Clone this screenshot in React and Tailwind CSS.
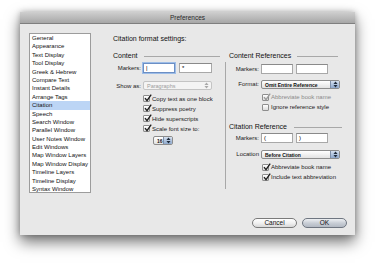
const panes = [
  'General',
  'Appearance',
  'Text Display',
  'Tool Display',
  'Greek & Hebrew',
  'Compare Text',
  'Instant Details',
  'Arrange Tags',
  'Citation',
  'Speech',
  'Search Window',
  'Parallel Window',
  'User Notes Window',
  'Edit Windows',
  'Map Window Layers',
  'Map Window Display',
  'Timeline Layers',
  'Timeline Display',
  'Syntax Window'
]

const Arrows = ({ color = '#222' }) => (
  <svg width="5" height="7" viewBox="0 0 5 7">
    <path d="M0.5 3 L2.5 0.6 L4.5 3 Z" fill={color} />
    <path d="M0.5 4 L2.5 6.4 L4.5 4 Z" fill={color} />
  </svg>
)

const Check = ({ checked, disabled }) => (
  <div className="w-[7px] h-[7px] shrink-0 relative rounded-[1px] border border-[#8e8e8e] bg-gradient-to-b from-white to-[#dcdcdc]">
    {checked && (
      <svg className="absolute -top-[2px] left-0" width="8" height="8" viewBox="0 0 8 8">
        <path
          d="M1 4.2 L3 6.6 L7.2 0.6"
          fill="none"
          stroke={disabled ? '#9a9a9a' : '#1c1c1c'}
          strokeWidth="1.3"
        />
      </svg>
    )}
  </div>
)

const CheckRow = ({ label, checked = false, disabled = false, indent }) => (
  <div className={`h-[10px] flex items-center gap-[2px] ${indent}`}>
    <Check checked={checked} disabled={disabled} />
    <span className={disabled ? 'text-[#8a8a8a]' : 'text-[#1a1a1a]'}>{label}</span>
  </div>
)

const Field = ({ value = '', focused = false, width = 'w-[32px]' }) => (
  <div
    className={`${width} h-[10px] bg-white flex items-center pl-[2px] text-[6px] leading-none ${
      focused
        ? 'border border-[#6c8fc4] shadow-[0_0_0_1px_#9dbde8]'
        : 'border border-[#a8a8a8] border-t-[#8a8a8a]'
    }`}
  >
    {value}
  </div>
)

const Popup = ({ value, width, disabled = false }) => (
  <div
    className={`${width} h-[9px] flex items-stretch rounded-[2px] border overflow-hidden ${
      disabled ? 'border-[#c4c4c4] bg-[#f4f4f4]' : 'border-[#8c8c8c] bg-gradient-to-b from-white to-[#e2e2e2]'
    }`}
  >
    <span
      className={`flex-1 pl-[3px] leading-[8px] ${
        disabled ? 'text-[5.5px] text-[#9c9c9c]' : 'text-[5px] text-[#111] font-bold'
      }`}
    >
      {value}
    </span>
    <span
      className={`w-[9px] flex items-center justify-center ${
        disabled ? '' : 'border-l border-[#7f8fa8] bg-gradient-to-b from-[#d6e1f0] to-[#8ea8cc]'
      }`}
    >
      <Arrows color={disabled ? '#a8a8a8' : '#1e2a3a'} />
    </span>
  </div>
)

const Header = ({ title, lineClass }) => (
  <div className="h-[8px] flex items-center text-[7px] leading-[8px] text-[#111]">
    <span>{title}</span>
    <div className={`h-px bg-[#a8a8a8] ${lineClass}`}></div>
  </div>
)

const Label = ({ text, width }) => (
  <span className={`${width} text-right pr-[2px] text-[#1a1a1a]`}>{text}</span>
)

const PillButton = ({ label, primary = false }) => (
  <button
    className={`w-[45px] h-[10px] rounded-full border text-[6.5px] leading-none text-[#111] ${
      primary
        ? 'border-[#6f7681] bg-gradient-to-b from-[#eef0f3] via-[#c9ced6] to-[#b3b9c3]'
        : 'border-[#7a7a7a] bg-gradient-to-b from-white via-[#f1f1f1] to-[#d8d8d8]'
    }`}
  >
    {label}
  </button>
)

const App = () => {
  return (
    <div className="w-[375px] h-[263px] bg-white pt-[12px] pl-[20px] font-['Liberation_Sans',Arial,sans-serif] text-[6px] leading-[8px]">
      <div className="w-[335px] h-[223px] bg-[#e8e8e8] flex flex-col shadow-[0_7px_14px_rgba(0,0,0,0.55),0_0_6px_rgba(0,0,0,0.25)]">
        {/* Title bar */}
        <div className="h-[12px] shrink-0 bg-gradient-to-b from-[#cfcfcf] to-[#a7a7a7] border-b border-[#7f7f7f] flex items-center justify-center text-[6.5px] text-[#2a2a2a]">
          Preferences
        </div>

        <div className="flex-1 flex">
          {/* Pane list */}
          <div className="pl-[9px] pt-[9px]">
            <div className="w-[62px] h-[160px] bg-white border border-[#9c9c9c]">
              {panes.map((p) => (
                <div
                  key={p}
                  className={`h-[8.4px] leading-[8.4px] pl-[2px] text-[#111] ${p === 'Citation' ? 'bg-[#bcd5f5]' : ''}`}
                >
                  {p}
                </div>
              ))}
            </div>
          </div>

          {/* Settings */}
          <div className="flex-1 flex flex-col pl-[22px] pt-[11px]">
            <div className="h-[8px] text-[7px] leading-[8px] text-[#111]">Citation format settings:</div>

            <div className="mt-[9px] flex">
              {/* Content */}
              <div className="w-[109px] flex flex-col">
                <Header title="Content" lineClass="flex-1 ml-[6px] mr-[2px]" />
                <div className="mt-[2px] h-[12px] flex items-center">
                  <Label text="Markers:" width="w-[30px]" />
                  <Field value="|" focused />
                  <div className="w-[4px]"></div>
                  <Field value="*" width="w-[33px]" />
                </div>
                <div className="mt-[7px] flex items-center">
                  <Label text="Show as:" width="w-[30px]" />
                  <Popup value="Paragraphs" width="w-[69px]" disabled />
                </div>
                <div className="mt-[3.5px]">
                  <CheckRow label="Copy text as one block" checked indent="ml-[30px]" />
                  <CheckRow label="Suppress poetry" checked indent="ml-[30px]" />
                  <CheckRow label="Hide superscripts" checked indent="ml-[30px]" />
                  <CheckRow label="Scale font size to:" checked indent="ml-[30px]" />
                </div>
                <div className="mt-[2px] ml-[40px]">
                  <Popup value="16" width="w-[20px]" />
                </div>
              </div>

              {/* Separator */}
              <div className="ml-[3px] mt-[10px] w-px h-[127px] bg-[#a8a8a8]"></div>

              {/* References */}
              <div className="ml-[3px] w-[116px] flex flex-col">
                <Header title="Content References" lineClass="flex-1 ml-[6px] mr-[7px]" />
                <div className="mt-[4px] flex items-center">
                  <Label text="Markers:" width="w-[32px]" />
                  <Field />
                  <div className="w-[3px]"></div>
                  <Field />
                </div>
                <div className="mt-[5.5px] flex items-center">
                  <Label text="Format:" width="w-[32px]" />
                  <Popup value="Omit Entire Reference" width="w-[79px]" />
                </div>
                <div className="mt-[3.5px]">
                  <CheckRow label="Abbreviate book name" checked disabled indent="ml-[33px]" />
                  <CheckRow label="Ignore reference style" indent="ml-[33px]" />
                </div>

                <div className="mt-[11px]">
                  <Header title="Citation Reference" lineClass="flex-1 ml-[7px] mr-[3px]" />
                </div>
                <div className="mt-[2px] flex items-center">
                  <Label text="Markers:" width="w-[32px]" />
                  <Field value="(" />
                  <div className="w-[3px]"></div>
                  <Field value=")" />
                </div>
                <div className="mt-[6.5px] flex items-center">
                  <Label text="Location" width="w-[32px]" />
                  <Popup value="Before Citation" width="w-[79px]" />
                </div>
                <div className="mt-[3.5px]">
                  <CheckRow label="Abbreviate book name" checked indent="ml-[33px]" />
                  <CheckRow label="Include text abbreviation" checked indent="ml-[33px]" />
                </div>
              </div>
            </div>

            <div className="flex-1"></div>

            {/* Buttons */}
            <div className="flex justify-end gap-[5px] pr-[8px] pb-[7px]">
              <PillButton label="Cancel" />
              <PillButton label="OK" primary />
            </div>
          </div>
        </div>
      </div>
    </div>
  )
}

export default App
